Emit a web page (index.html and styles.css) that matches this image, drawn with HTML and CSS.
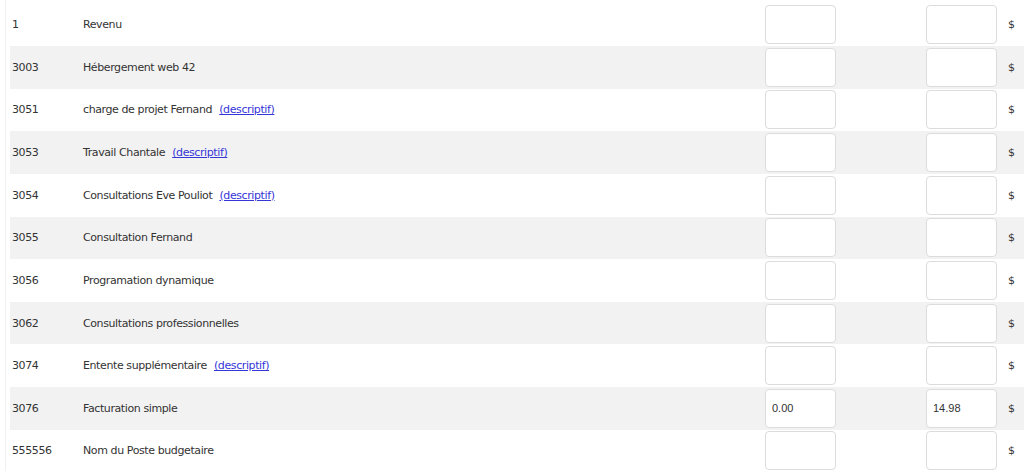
FILE: index.html
```html
<!DOCTYPE html>
<html lang="fr">
<head>
<meta charset="utf-8">
<title>Postes budgétaires</title>
<link rel="stylesheet" href="styles.css">
</head>
<body>
<div class="frame">
  <div class="budget">
    <div class="row">
      <div class="code">1</div>
      <div class="label">Revenu</div>
      <div class="cell-a"><input class="amount" type="text" value=""></div>
      <div class="cell-b"><input class="amount" type="text" value=""></div>
      <div class="cur">$</div>
    </div>
    <div class="row">
      <div class="code">3003</div>
      <div class="label">Hébergement web 42</div>
      <div class="cell-a"><input class="amount" type="text" value=""></div>
      <div class="cell-b"><input class="amount" type="text" value=""></div>
      <div class="cur">$</div>
    </div>
    <div class="row">
      <div class="code">3051</div>
      <div class="label">charge de projet Fernand <a class="desc" href="#">(descriptif)</a></div>
      <div class="cell-a"><input class="amount" type="text" value=""></div>
      <div class="cell-b"><input class="amount" type="text" value=""></div>
      <div class="cur">$</div>
    </div>
    <div class="row">
      <div class="code">3053</div>
      <div class="label">Travail Chantale <a class="desc" href="#">(descriptif)</a></div>
      <div class="cell-a"><input class="amount" type="text" value=""></div>
      <div class="cell-b"><input class="amount" type="text" value=""></div>
      <div class="cur">$</div>
    </div>
    <div class="row">
      <div class="code">3054</div>
      <div class="label">Consultations Eve Pouliot <a class="desc" href="#">(descriptif)</a></div>
      <div class="cell-a"><input class="amount" type="text" value=""></div>
      <div class="cell-b"><input class="amount" type="text" value=""></div>
      <div class="cur">$</div>
    </div>
    <div class="row">
      <div class="code">3055</div>
      <div class="label">Consultation Fernand</div>
      <div class="cell-a"><input class="amount" type="text" value=""></div>
      <div class="cell-b"><input class="amount" type="text" value=""></div>
      <div class="cur">$</div>
    </div>
    <div class="row">
      <div class="code">3056</div>
      <div class="label">Programation dynamique</div>
      <div class="cell-a"><input class="amount" type="text" value=""></div>
      <div class="cell-b"><input class="amount" type="text" value=""></div>
      <div class="cur">$</div>
    </div>
    <div class="row">
      <div class="code">3062</div>
      <div class="label">Consultations professionnelles</div>
      <div class="cell-a"><input class="amount" type="text" value=""></div>
      <div class="cell-b"><input class="amount" type="text" value=""></div>
      <div class="cur">$</div>
    </div>
    <div class="row">
      <div class="code">3074</div>
      <div class="label">Entente supplémentaire <a class="desc" href="#">(descriptif)</a></div>
      <div class="cell-a"><input class="amount" type="text" value=""></div>
      <div class="cell-b"><input class="amount" type="text" value=""></div>
      <div class="cur">$</div>
    </div>
    <div class="row">
      <div class="code">3076</div>
      <div class="label">Facturation simple</div>
      <div class="cell-a"><input class="amount" type="text" value="0.00"></div>
      <div class="cell-b"><input class="amount" type="text" value="14.98"></div>
      <div class="cur">$</div>
    </div>
    <div class="row">
      <div class="code">555556</div>
      <div class="label">Nom du Poste budgetaire</div>
      <div class="cell-a"><input class="amount" type="text" value=""></div>
      <div class="cell-b"><input class="amount" type="text" value=""></div>
      <div class="cur">$</div>
    </div>
  </div>
</div>
</body>
</html>
```
FILE: styles.css
```css
html, body {
  margin: 0;
  padding: 0;
  background: #ffffff;
  overflow: hidden;
}

body {
  font-family: "DejaVu Sans", Verdana, sans-serif;
  font-size: 11px;
  letter-spacing: -0.4px;
  color: #333333;
}

.frame {
  margin-left: 5px;
  padding-left: 4px;
  padding-top: 3.4px;
  border-left: 1px solid #f0f0f0;
  min-height: 480px;
}

.budget {
  display: flex;
  flex-direction: column;
}

.row {
  display: grid;
  grid-template-columns: 73px 670px 161px 86px 1fr;
  height: 42.625px;
  align-items: center;
  background: #ffffff;
}

.row:nth-child(even) {
  background: #f2f2f2;
}

.code {
  padding-left: 2px;
}

.label {
  white-space: nowrap;
}

.desc {
  color: #3535d8;
  text-decoration: underline;
  margin-left: 4px;
}

.cell-a,
.cell-b {
  padding-left: 12px;
  display: flex;
  align-items: center;
}

.amount {
  box-sizing: border-box;
  width: 71px;
  height: 39px;
  margin: 0;
  padding: 0 6px;
  border: 1px solid #dcdcdc;
  border-radius: 4px;
  background: #ffffff;
  font-family: "Liberation Sans", Arial, sans-serif;
  font-size: 11px;
  letter-spacing: 0;
  color: #333333;
  outline: none;
}

.cur {
  padding-left: 8px;
  font-size: 11px;
}
```
